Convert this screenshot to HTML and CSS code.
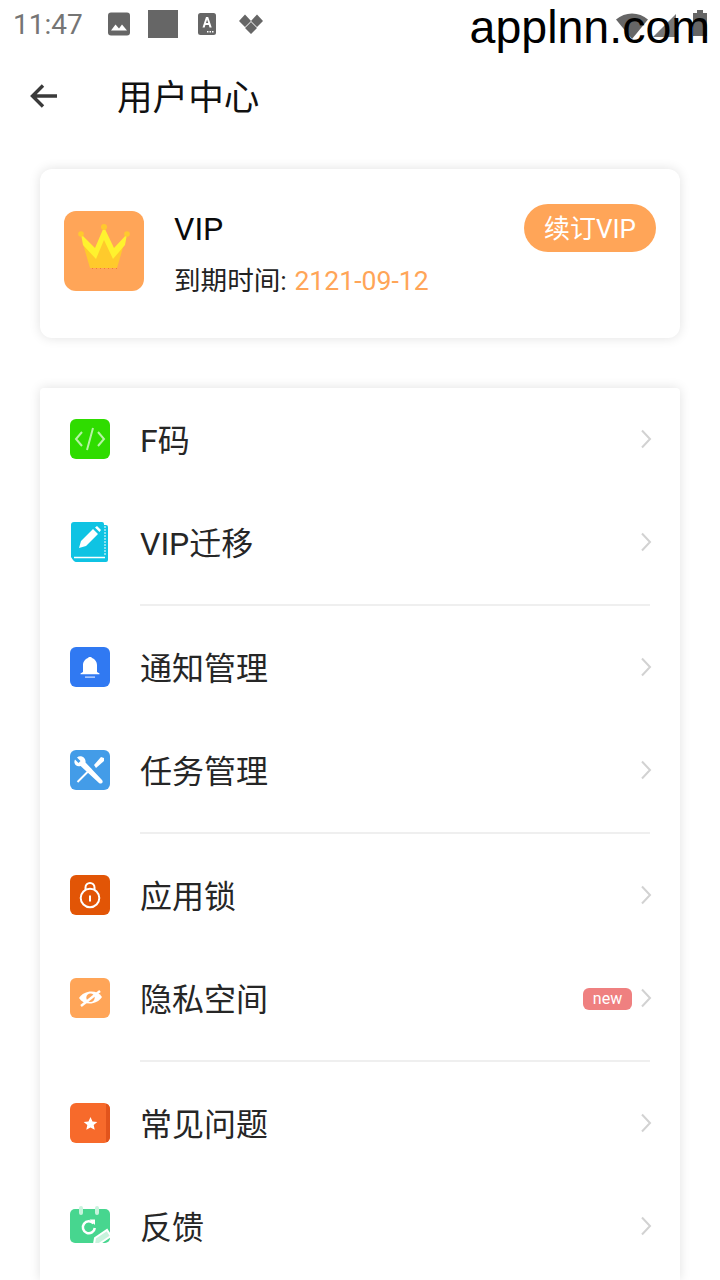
FILE: index.html
```html
<!DOCTYPE html>
<html lang="zh-CN">
<head>
<meta charset="utf-8">
<title>用户中心</title>
<link rel="stylesheet" href="styles.css">
</head>
<body>
<div class="status">
  <span class="time">11:47</span>
  <svg class="st-ic" width="24" height="24" viewBox="0 0 24 24"><rect x="1" y="0.500" width="22" height="23" rx="3" fill="#666"/><path d="M4 18.500l4.500-6 3.500 4 3-4 5 6z" fill="#fff"/></svg>
  <span class="st-sq"></span>
  <svg class="st-ic st-a" width="20" height="24" viewBox="0 0 20 24"><rect x="1" y="1" width="18" height="22" rx="2.500" fill="#666"/><path d="M5.500 15.500L9 5h2.200l3.500 10.500h-2.200l-.7-2.400H8.400l-.7 2.400zM9 11h2.200L10.100 7.500z" fill="#fff"/><path d="M10 19h1.500v1.500H10zM12.500 19H14v1.500h-1.500zM15 19h1.500v1.500H15z" fill="#fff"/></svg>
  <svg class="st-ic st-d" width="26" height="24" viewBox="0 0 26 24"><path d="M7 2.500L13 9l-6 6-6-6zM19 2.500L25 9l-6 6-6-6zM13 10l6 6-6 6-6-6z" fill="#666"/></svg>
  <span class="st-right">
    <svg class="st-wifi" width="32" height="26" viewBox="0 0 32 26"><path d="M0 6.500C9-1.500 23-1.500 32 6.500L16 26z" fill="#666"/></svg>
    <svg class="st-signal" width="23" height="24" viewBox="0 0 23 24"><path d="M0 23L23 0v23z" fill="#777"/></svg>
    <svg class="st-batt" width="14" height="26" viewBox="0 0 14 26"><path d="M4 0h6v3h4v23H0V3h4z" fill="#666"/></svg>
  </span>
  <span class="watermark">applnn.com</span>
</div>

<header class="topbar">
  <svg class="back" width="32" height="32" viewBox="0 0 32 32"><path d="M29 16H5M15 5.500L4.500 16 15 26.500" fill="none" stroke="#3a3a3a" stroke-width="3.400"/></svg>
  <h1 class="title">用户中心</h1>
</header>

<section class="vip-card">
  <div class="crown-box">
    <svg width="80" height="80" viewBox="0 0 80 80">
      <path d="M19 33l13 13 8-18 9 18 11-13-7 24H26z" fill="#ffca2c"/>
      <path d="M17 23l14 14 9-21 10 21 13-14-2 11-12 14-9-19-8 19-13-14z" fill="#fff22e"/>
      <circle cx="17" cy="23" r="2.800" fill="#ffc92e"/>
      <circle cx="40" cy="16" r="3" fill="#ffc92e"/>
      <circle cx="63" cy="23" r="2.800" fill="#ffc92e"/>
      <path d="M28 57.500h25" stroke="#f0702a" stroke-width="0.800" stroke-dasharray="1 3"/>
    </svg>
  </div>
  <div class="vip-info">
    <div class="vip-name">VIP</div>
    <div class="vip-date">到期时间: <span class="vip-value">2121-09-12</span></div>
  </div>
  <button class="renew"><span class="renew-text">续订VIP</span></button>
</section>

<section class="menu">
  <div class="row">
    <span class="icon ic-green"><svg width="40" height="40" viewBox="0 0 40 40"><path d="M12 13l-6 7 6 7M28 13l6 7-6 7M23 9l-6 22" fill="none" stroke="#b6f3a4" stroke-width="2"/></svg></span>
    <span class="label">F码</span>
    <svg class="chev" width="12" height="20" viewBox="0 0 12 20"><path d="M2 1.500L10 10l-8 8.500" fill="none" stroke="#d2d2d2" stroke-width="2"/></svg>
  </div>
  <div class="row">
    <span class="icon ic-plain"><svg width="40" height="40" viewBox="0 0 40 40"><path d="M4 0h28a2 2 0 0 1 2 2v1h2a2 2 0 0 1 2 2v33a2 2 0 0 1-2 2H7a4 4 0 0 1-4-2L1 35V3a3 3 0 0 1 3-3z" fill="#0fc3e3"/><path d="M4 35.500h31" stroke="#fff" stroke-width="1.500"/><path d="M35 4v30" stroke="#fff" stroke-width="1" stroke-dasharray="2 1"/><path d="M9 26l2-7L23 7l5 5-12 12zM25 5.500l2-1.500 4 4-1.500 2z" fill="#fff"/></svg></span>
    <span class="label">VIP迁移</span>
    <svg class="chev" width="12" height="20" viewBox="0 0 12 20"><path d="M2 1.500L10 10l-8 8.500" fill="none" stroke="#d2d2d2" stroke-width="2"/></svg>
  </div>
  <div class="divider"></div>
  <div class="row">
    <span class="icon ic-blue"><svg width="40" height="40" viewBox="0 0 40 40"><path d="M13 25v-7c0-3.500 2.500-6.500 5.500-7.300V10h3v.7c3 .8 5.500 3.800 5.500 7.300v7l2.500 1.500v.7h-19v-.7z" fill="#fff"/><path d="M15 29.500h10v1.300H15z" fill="#cfe0ff"/></svg></span>
    <span class="label">通知管理</span>
    <svg class="chev" width="12" height="20" viewBox="0 0 12 20"><path d="M2 1.500L10 10l-8 8.500" fill="none" stroke="#d2d2d2" stroke-width="2"/></svg>
  </div>
  <div class="row">
    <span class="icon ic-sky"><svg width="40" height="40" viewBox="0 0 40 40"><path d="M12 6.500c-2-.6-3.500-.3-5 1L10.500 11l-2 2L5 9.500c-1 2-.8 4 .6 5.500 1.400 1.300 3.200 1.600 5 1L29 33c1 .8 2 .8 3 0s.8-2 0-3L15.500 12.500c.5-2.500-1-5-3.500-6z" fill="#fff"/><path d="M7.500 32L21 18.500" stroke="#fff" stroke-width="2" fill="none"/><path d="M24 15l7-8 3 1 0 3-8 7z" fill="#fff"/></svg></span>
    <span class="label">任务管理</span>
    <svg class="chev" width="12" height="20" viewBox="0 0 12 20"><path d="M2 1.500L10 10l-8 8.500" fill="none" stroke="#d2d2d2" stroke-width="2"/></svg>
  </div>
  <div class="divider"></div>
  <div class="row">
    <span class="icon ic-red"><svg width="40" height="40" viewBox="0 0 40 40"><circle cx="20" cy="23" r="9.300" fill="none" stroke="#fff" stroke-width="2"/><path d="M15.500 15v-2.500a4.500 4.500 0 0 1 9 0V15" fill="none" stroke="#fff" stroke-width="2"/><path d="M20 20.500v6" stroke="#fff" stroke-width="2"/></svg></span>
    <span class="label">应用锁</span>
    <svg class="chev" width="12" height="20" viewBox="0 0 12 20"><path d="M2 1.500L10 10l-8 8.500" fill="none" stroke="#d2d2d2" stroke-width="2"/></svg>
  </div>
  <div class="row">
    <span class="icon ic-orange"><svg width="40" height="40" viewBox="0 0 40 40"><path d="M9 20c5-8 18-9 23-1-5 8-18 9-23 1z" fill="#fff"/><circle cx="20.500" cy="19.700" r="4.200" fill="#ffa558"/><path d="M11 28L30 13" stroke="#fff" stroke-width="2.400"/></svg></span>
    <span class="label">隐私空间</span>
    <span class="badge">new</span>
    <svg class="chev chev-badge" width="12" height="20" viewBox="0 0 12 20"><path d="M2 1.500L10 10l-8 8.500" fill="none" stroke="#d2d2d2" stroke-width="2"/></svg>
  </div>
  <div class="divider"></div>
  <div class="row">
    <span class="icon ic-coral"><svg width="40" height="40" viewBox="0 0 40 40"><path d="M36 1h1a3 3 0 0 1 3 3v32a3 3 0 0 1-3 3h-1z" fill="#e2541c"/><path d="M20.500 14l2 4.400 4.800.5-3.600 3.200 1 4.700-4.200-2.400-4.200 2.400 1-4.700-3.600-3.200 4.800-.5z" fill="#fff"/></svg></span>
    <span class="label">常见问题</span>
    <svg class="chev" width="12" height="20" viewBox="0 0 12 20"><path d="M2 1.500L10 10l-8 8.500" fill="none" stroke="#d2d2d2" stroke-width="2"/></svg>
  </div>
  <div class="row">
    <span class="icon ic-plain"><svg width="40" height="40" viewBox="0 0 40 40"><rect x="0" y="3" width="40" height="34" rx="5" fill="#47d68f"/><path d="M11 2v5M27 2v5" stroke="#c8f3dd" stroke-width="4" stroke-linecap="round"/><path d="M23.500 17.500a6 6 0 1 0 1.300 4.500" fill="none" stroke="#fff" stroke-width="2.500"/><path d="M19.500 13.500h5.500V19z" fill="#fff"/><path d="M24 38l1-6 12-8 4 6-12 8z" fill="#c8f3dd" stroke="#fff" stroke-width="2"/></svg></span>
    <span class="label">反馈</span>
    <svg class="chev" width="12" height="20" viewBox="0 0 12 20"><path d="M2 1.500L10 10l-8 8.500" fill="none" stroke="#d2d2d2" stroke-width="2"/></svg>
  </div>
</section>
</body>
</html>
```
FILE: styles.css
```css
* { box-sizing: border-box; }
html, body { margin: 0; padding: 0; }
body {
  width: 720px;
  height: 1280px;
  overflow: hidden;
  background: #fff;
  font-family: Roboto, "Noto Sans CJK SC", sans-serif;
}
.status {
  position: relative;
  height: 48px;
  display: flex;
  align-items: center;
  padding: 0 13px 0 13px;
}
.time { font-size: 28px; color: #757575; width: 94px; }
.st-ic { flex: none; }
.st-sq { width: 30px; height: 28px; background: #666; margin: 0 19px 0 17px; flex: none; }
.st-d { margin-left: 21px; }
.st-right { margin-left: auto; align-self: flex-start; display: flex; align-items: flex-start; margin-top: 10px; }
.st-wifi { margin-top: 3px; }
.st-signal { margin: 4px 0 0 5px; }
.st-batt { margin-left: 17px; }
.watermark {
  position: absolute;
  right: 10px;
  top: 0;
  font-family: "Liberation Sans", Arial, sans-serif;
  font-size: 46.500px;
  line-height: 54px;
  color: #000;
}
.topbar {
  height: 96px;
  display: flex;
  align-items: center;
  padding-left: 28px;
}
.back { flex: none; }
.title {
  margin: 0 0 4px 57px;
  font-size: 35.600px;
  font-weight: 400;
  color: #111;
}
.vip-card {
  margin: 25px 40px 0;
  height: 169px;
  background: #fff;
  border-radius: 12px;
  box-shadow: 0 0 12px rgba(0, 0, 0, 0.12);
  padding: 0 24px;
  display: flex;
  align-items: flex-start;
}
.crown-box {
  width: 80px;
  height: 80px;
  margin-top: 42px;
  background: #ffa558;
  border-radius: 12px;
  flex: none;
}
.crown-box svg { display: block; }
.vip-info { margin: 40px 0 0 30px; flex: 1; }
.vip-name { font-size: 32px; line-height: 40px; color: #0a0a0a; }
.vip-date { font-size: 26.600px; line-height: 36px; margin-top: 14px; color: #222; }
.vip-value { color: #ffa558; margin-left: 1px; }
.renew {
  width: 132px;
  height: 48px;
  margin-top: 35px;
  border: 0;
  padding: 0;
  border-radius: 24px;
  background: #ffa558;
  color: #fff;
  font: inherit;
  font-size: 26px;
  flex: none;
}
.renew-text { display: block; margin-bottom: 3px; }
.menu {
  margin: 50px 40px 0;
  height: 892px;
  background: #fff;
  box-shadow: 0 0 12px rgba(0, 0, 0, 0.12);
  border-radius: 4px 4px 0 0;
}
.row {
  height: 103px;
  display: flex;
  align-items: center;
  padding: 0 30px 2px;
}
.icon {
  width: 40px;
  height: 40px;
  border-radius: 6px;
  display: block;
  flex: none;
  overflow: hidden;
}
.icon svg { display: block; }
.ic-green { background: #2fdc00; }
.ic-plain { border-radius: 0; }
.ic-blue { background: #3079f2; }
.ic-sky { background: #439ce8; }
.ic-red { background: #e25506; }
.ic-orange { background: #ffa558; }
.ic-coral { background: #f76a2b; }
.label {
  margin-left: 30px;
  padding-bottom: 2px;
  font-size: 32px;
  color: #262626;
  flex: 1;
}
.chev { flex: none; margin-left: auto; margin-right: -2px; }
.chev-badge { margin-left: 8px; }
.badge {
  width: 49px;
  height: 22px;
  margin-top: 2px;
  background: #ef8080;
  border-radius: 6px;
  color: #fff;
  font-size: 16px;
  line-height: 22px;
  text-align: center;
  flex: none;
}
.divider {
  height: 2px;
  margin: 10px 30px 10px 100px;
  background: #efefef;
}
```
